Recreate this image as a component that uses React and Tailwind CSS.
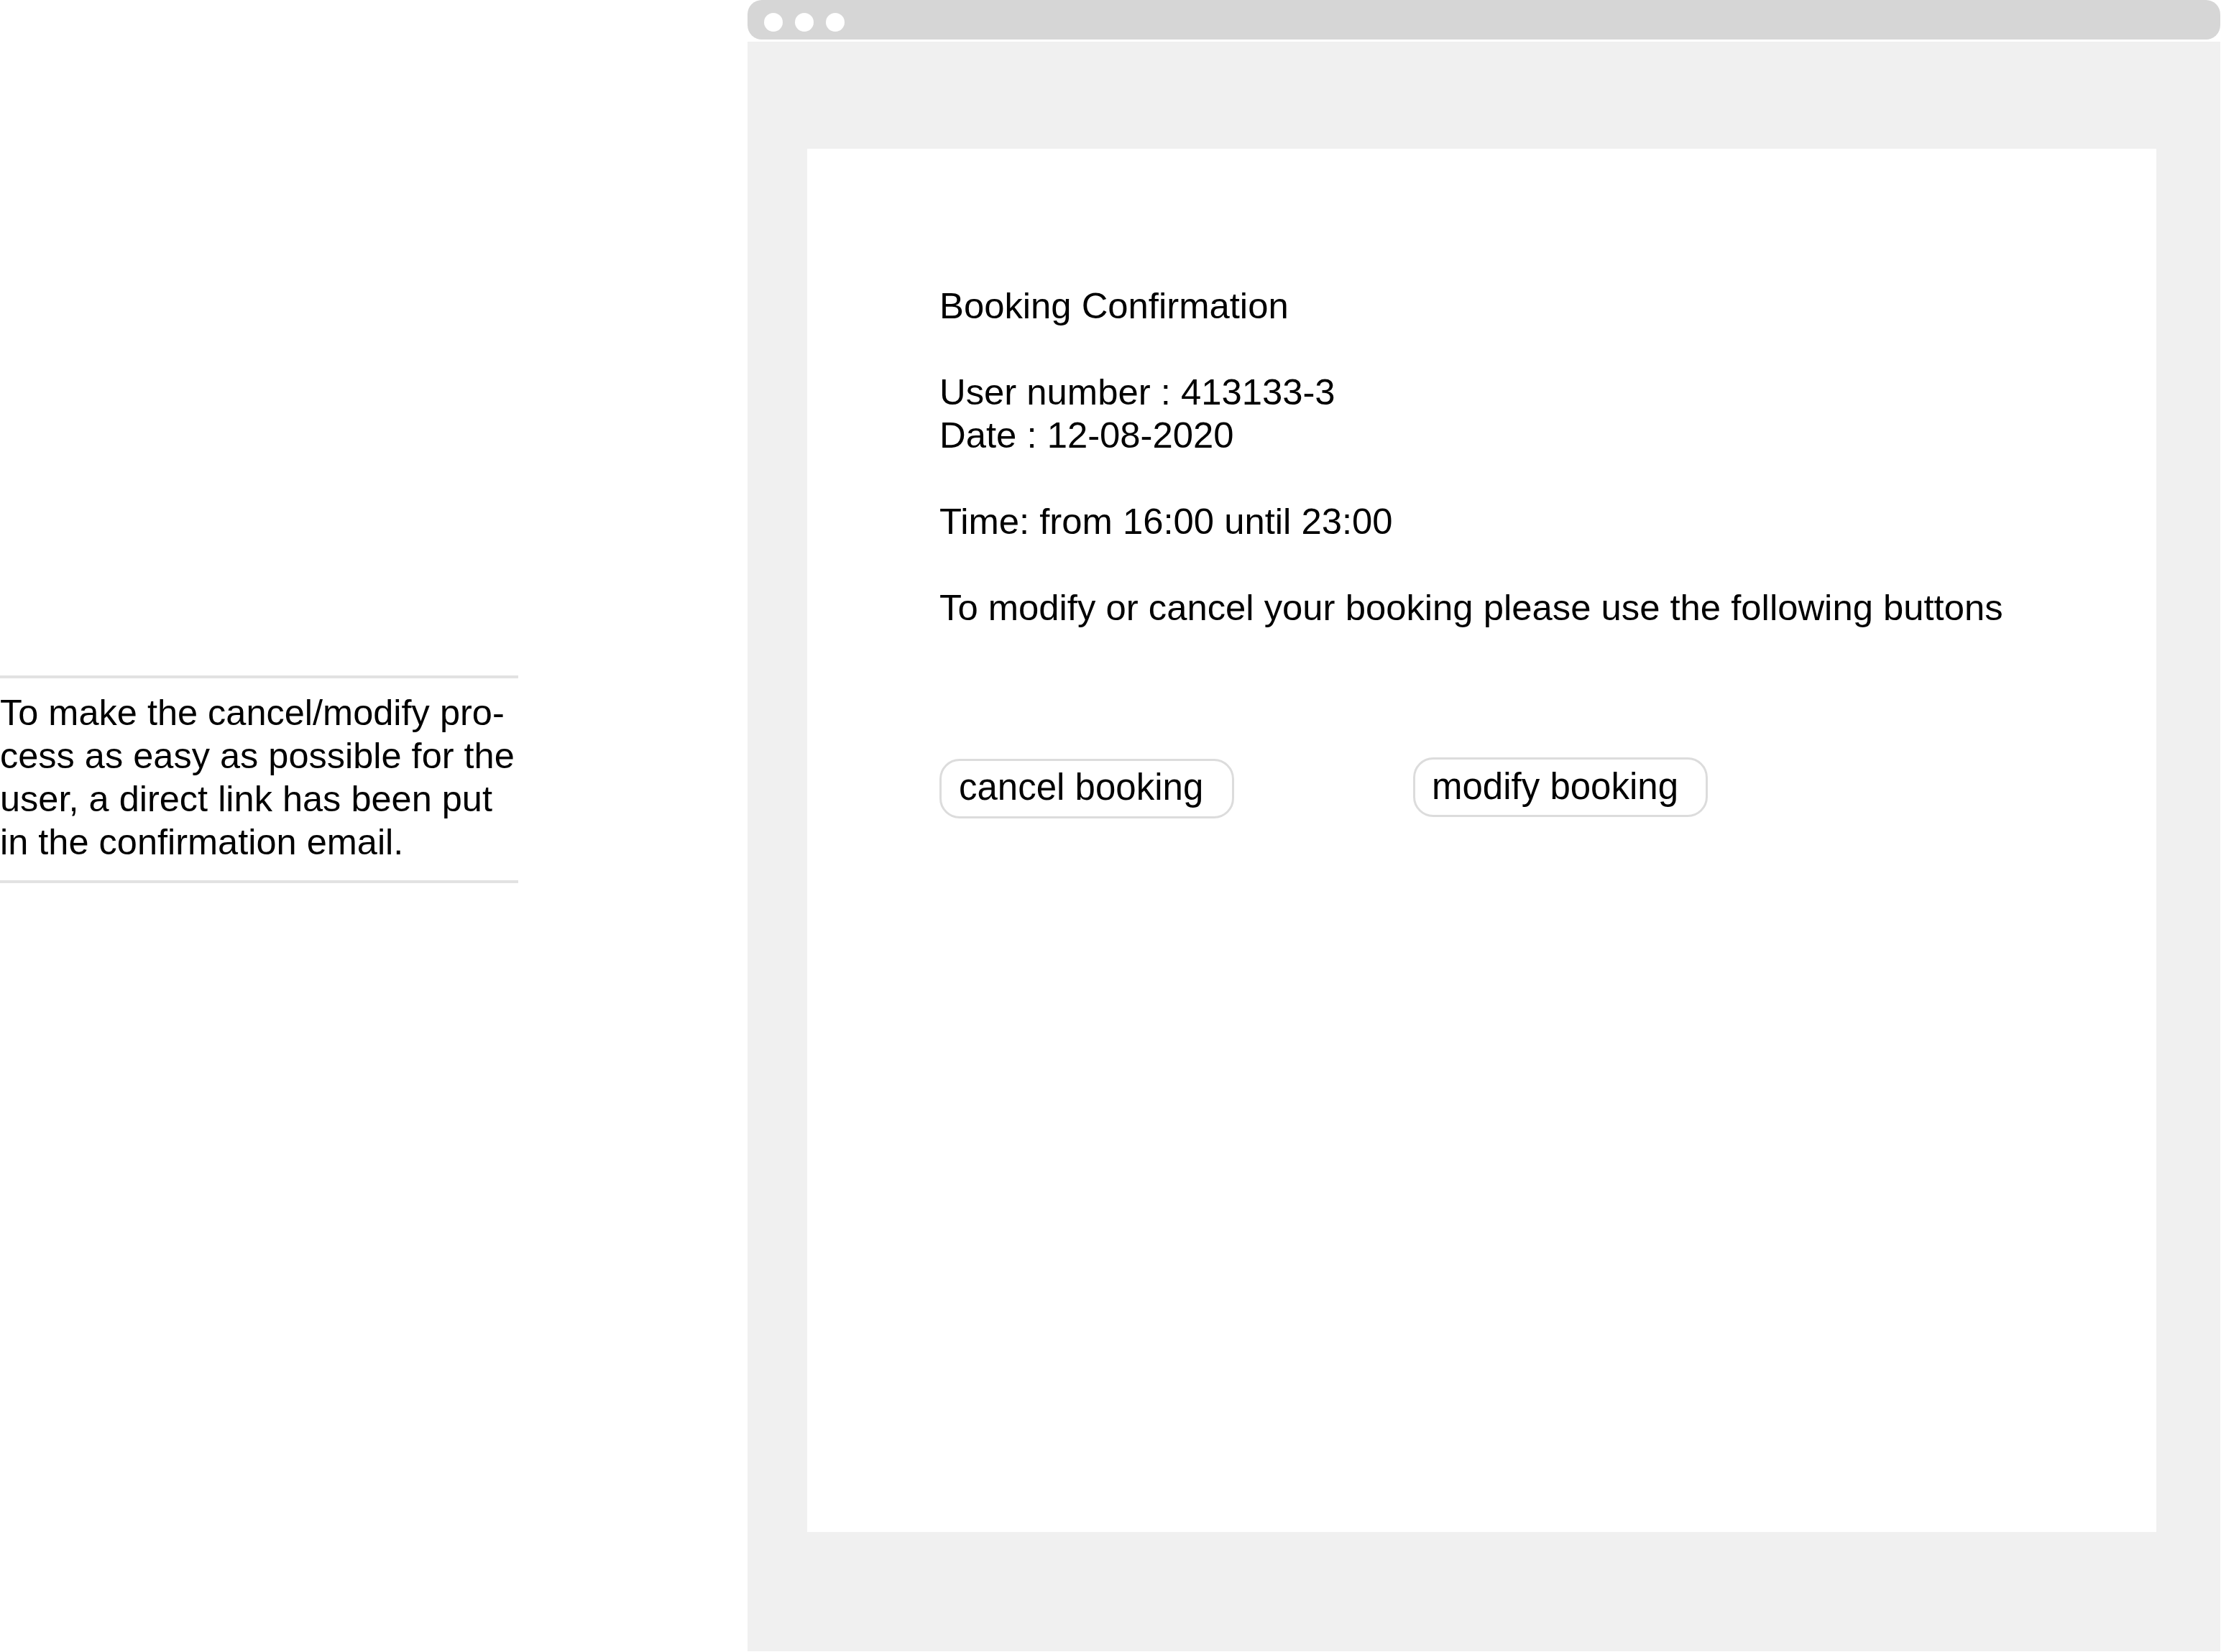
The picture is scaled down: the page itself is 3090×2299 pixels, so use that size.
export default function App() {
  const font = { fontFamily: '"Liberation Sans", Arial, sans-serif' };
  return (
    <div className="flex w-[3090px] h-[2299px] bg-white text-black" style={font}>
      <div className="w-[1040px] shrink-0 pt-[940px]">
        <div className="w-[721px] border-t-[4px] border-b-[4px] border-[#e2e2e2] pt-[18px] pb-[23px] text-[50.5px] leading-[60px] whitespace-nowrap">
          <div>To make the cancel/modify pro-</div>
          <div>cess as easy as possible for the</div>
          <div>user, a direct link has been put</div>
          <div>in the confirmation email.</div>
        </div>
      </div>
      <div className="w-[2049px] shrink-0 flex flex-col">
        <div className="h-[55px] rounded-[20px] bg-[#d6d6d6] flex items-center gap-[17px] pl-[23px] pt-[7px]">
          <div className="w-[26px] h-[26px] rounded-full bg-white" />
          <div className="w-[26px] h-[26px] rounded-full bg-white" />
          <div className="w-[26px] h-[26px] rounded-full bg-white" />
        </div>
        <div className="mt-[3px] h-[2240px] bg-[#f0f0f0] pt-[149px] pl-[83px]">
          <div className="w-[1877px] h-[1925px] bg-white pl-[184px] pt-[189px]">
            <div className="text-[50.8px] leading-[60px] whitespace-nowrap">
              <div>Booking Confirmation</div>
              <div>&nbsp;</div>
              <div>User number : 413133-3</div>
              <div>Date : 12-08-2020</div>
              <div>&nbsp;</div>
              <div>Time: from 16:00 until 23:00</div>
              <div>&nbsp;</div>
              <div>To modify or cancel your booking please use the following buttons</div>
            </div>
            <div className="flex items-start gap-[249px] mt-[178px]">
              <div className="mt-[2px] w-[410px] h-[83px] rounded-[28px] border-[3px] border-[#dcdcdc] flex items-center pl-[24px] pb-[4px] text-[51px] leading-[60px] whitespace-nowrap">
                cancel booking
              </div>
              <div className="w-[410px] h-[83px] rounded-[28px] border-[3px] border-[#dcdcdc] flex items-center pl-[23px] pb-[2px] text-[51px] leading-[60px] whitespace-nowrap">
                modify booking
              </div>
            </div>
          </div>
        </div>
      </div>
    </div>
  );
}
